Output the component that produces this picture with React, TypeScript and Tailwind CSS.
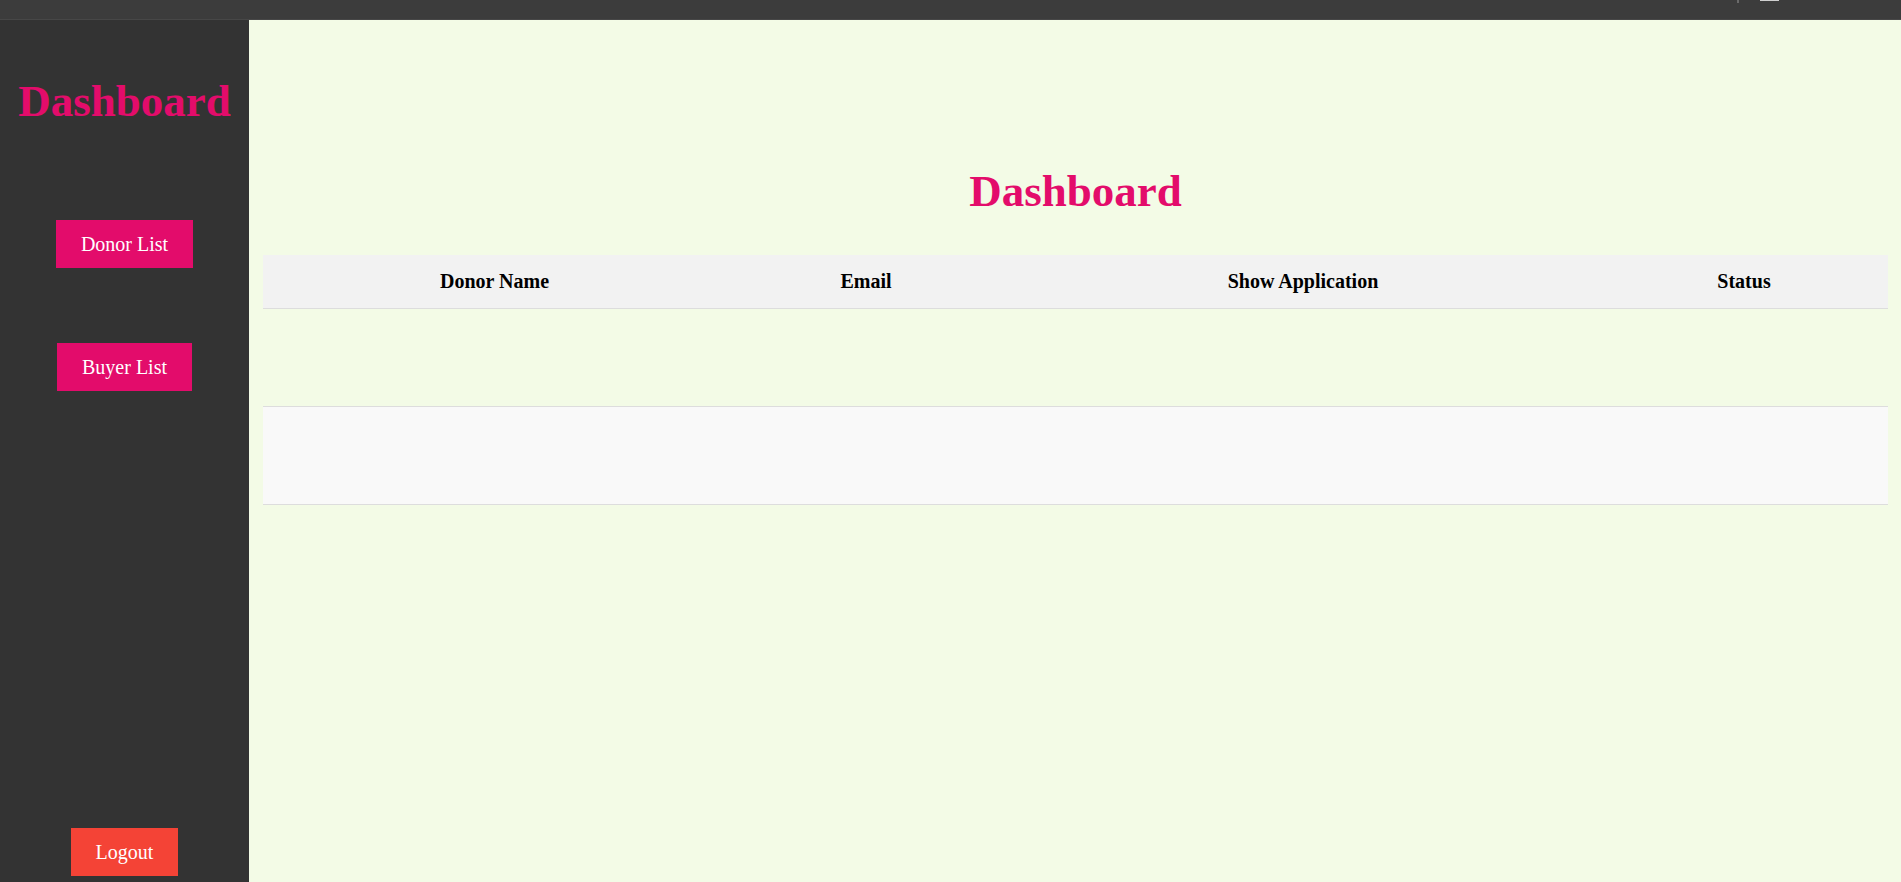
import React from 'react';

const serif = "font-['Liberation_Serif','Times_New_Roman',serif]";

const columns = [
  { label: 'Donor Name', width: 'w-[463px]' },
  { label: 'Email', width: 'w-[280px]' },
  { label: 'Show Application', width: 'w-[594px]' },
  { label: 'Status', width: 'w-[288px]' },
];

const SideButton: React.FC<{ label: string; danger?: boolean; className?: string }> = ({ label, danger, className = '' }) => (
  <button
    className={`px-[25px] py-[12px] text-[20px] leading-[24px] text-white ${danger ? 'bg-[#f44336]' : 'bg-[#e30c6b]'} ${className}`}
  >
    {label}
  </button>
);

export default function App() {
  return (
    <div className={`flex h-[882px] w-[1901px] flex-col overflow-hidden ${serif}`}>
      {/* window strip at the top */}
      <div className="relative h-[20px] shrink-0 border-b border-[#474747] bg-[#3c3c3c]">
        <div className="absolute left-[1737px] top-0 h-[3px] w-[2px] bg-[#6a6a6a]" />
        <div className="absolute left-[1760px] top-0 h-[1px] w-[19px] bg-[#cfcfcf]" />
      </div>

      <div className="flex min-h-0 flex-1">
        <aside className="flex w-[249px] shrink-0 flex-col items-center bg-[#333333] pb-[6px] pt-[59px]">
          <h1 className="text-[45px] font-bold leading-none text-[#e30c6b]">Dashboard</h1>
          <SideButton label="Donor List" className="mt-[96px]" />
          <SideButton label="Buyer List" className="mt-[75px]" />
          <SideButton label="Logout" danger className="mt-auto" />
        </aside>

        <main className="flex-1 bg-[#f3fbe6] pl-[14px] pr-[13px] pt-[149px]">
          <h2 className="text-center text-[45px] font-bold leading-none text-[#e30c6b]">Dashboard</h2>
          <table className="mt-[41px] w-full table-fixed border-collapse">
            <colgroup>
              {columns.map(c => (
                <col key={c.label} className={c.width} />
              ))}
            </colgroup>
            <thead>
              <tr className="h-[53px] border-b border-[#dddddd] bg-[#f2f2f2]">
                {columns.map(c => (
                  <th key={c.label} className="p-0 text-center text-[20px] font-bold text-black">
                    {c.label}
                  </th>
                ))}
              </tr>
            </thead>
            <tbody>
              <tr className="h-[98px] border-b border-[#dddddd]">
                {columns.map(c => <td key={c.label} />)}
              </tr>
              <tr className="h-[98px] border-b border-[#dddddd] bg-[#f9f9f9]">
                {columns.map(c => <td key={c.label} />)}
              </tr>
            </tbody>
          </table>
        </main>
      </div>
    </div>
  );
}
